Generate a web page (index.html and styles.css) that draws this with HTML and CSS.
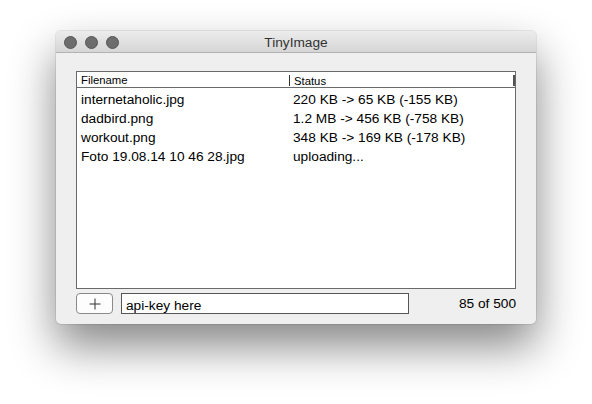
FILE: index.html
```html
<!DOCTYPE html>
<html>
<head>
<meta charset="utf-8">
<link rel="stylesheet" href="styles.css">
</head>
<body>
<div class="window">
  <div class="titlebar">
    <div class="lights">
      <span class="light"></span>
      <span class="light"></span>
      <span class="light"></span>
    </div>
    <div class="title">TinyImage</div>
  </div>
  <div class="content">
    <div class="table">
      <div class="thead">
        <div class="th th-name">Filename</div>
        <div class="th th-status">Status</div>
      </div>
      <div class="tbody">
        <div class="row"><div class="cell">internetaholic.jpg</div><div class="cell status">220 KB -&gt; 65 KB (-155 KB)</div></div>
        <div class="row"><div class="cell">dadbird.png</div><div class="cell status">1.2 MB -&gt; 456 KB (-758 KB)</div></div>
        <div class="row"><div class="cell">workout.png</div><div class="cell status">348 KB -&gt; 169 KB (-178 KB)</div></div>
        <div class="row"><div class="cell">Foto 19.08.14 10 46 28.jpg</div><div class="cell status">uploading...</div></div>
      </div>
    </div>
    <div class="footer">
      <button class="add" aria-label="add">
        <svg width="12" height="12" viewBox="0 0 12 12"><path d="M6 0.5V11.5M0.5 6H11.5" stroke="#333" stroke-width="1" fill="none"/></svg>
      </button>
      <div class="input">api-key here</div>
      <div class="count">85 of 500</div>
    </div>
  </div>
</div>
</body>
</html>
```
FILE: styles.css
```css
html, body {
  margin: 0;
  background: #ffffff;
}
body {
  box-sizing: border-box;
  min-height: 404px;
  padding: 31px 0 0 56px;
  font-family: "Liberation Sans", Arial, sans-serif;
  color: #000;
}
.window {
  width: 480px;
  height: 293px;
  background: #efefef;
  border-radius: 5px;
  box-shadow: 0 22px 45px rgba(0, 0, 0, 0.48), 0 0 0 1px rgba(0, 0, 0, 0.08);
  display: flex;
  flex-direction: column;
  overflow: hidden;
}
.titlebar {
  height: 21px;
  border-bottom: 1px solid #b3b3b3;
  background: linear-gradient(#ececec, #d6d6d6);
  border-radius: 5px 5px 0 0;
  display: grid;
  grid-template-columns: 1fr;
  align-items: center;
}
.lights {
  grid-area: 1 / 1;
  display: flex;
  gap: 8px;
  padding-left: 8px;
  padding-top: 1px;
}
.light {
  width: 11px;
  height: 11px;
  border-radius: 50%;
  background: #6d6d6d;
  border: 0.5px solid #555;
}
.title {
  grid-area: 1 / 1;
  text-align: center;
  font-size: 13.7px;
  color: #333;
  padding-top: 2px;
}
.content {
  flex: 1;
  display: flex;
  flex-direction: column;
  padding: 18px 20px 9px 20px;
}
.table {
  height: 216px;
  border: 1px solid #6a6a6a;
  background: #ffffff;
  display: flex;
  flex-direction: column;
}
.thead {
  height: 15px;
  border-bottom: 1px solid #6a6a6a;
  display: grid;
  grid-template-columns: 212px 1fr;
  align-items: center;
  font-size: 11.3px;
}
.th {
  padding-left: 4px;
  line-height: 13px;
}
.th-name {
  padding-top: 2px;
}
.th-status {
  border-left: 1px solid #333;
  border-right: 2px solid #555;
  padding-left: 4px;
  height: 11px;
  line-height: 13px;
  margin-top: 1px;
}
.tbody {
  display: flex;
  flex-direction: column;
}
.row {
  display: grid;
  grid-template-columns: 212px 1fr;
  height: 19px;
  align-items: center;
  font-size: 13.7px;
}
.cell {
  padding-left: 4px;
  padding-top: 4px;
}
.footer {
  margin-top: 4px;
  display: flex;
  align-items: center;
  height: 21px;
}
.add {
  width: 37px;
  height: 21px;
  border: 1px solid #8a8a8a;
  border-radius: 4px;
  background: #fdfdfd;
  padding: 0;
  display: flex;
  align-items: center;
  justify-content: center;
}
.input {
  margin-left: 8px;
  width: 282px;
  height: 16px;
  padding-top: 3px;
  border: 1px solid #555;
  background: #fff;
  font-size: 13.7px;
  line-height: 17px;
  padding-left: 4px;
}
.count {
  margin-left: auto;
  font-size: 13.7px;
}
```
